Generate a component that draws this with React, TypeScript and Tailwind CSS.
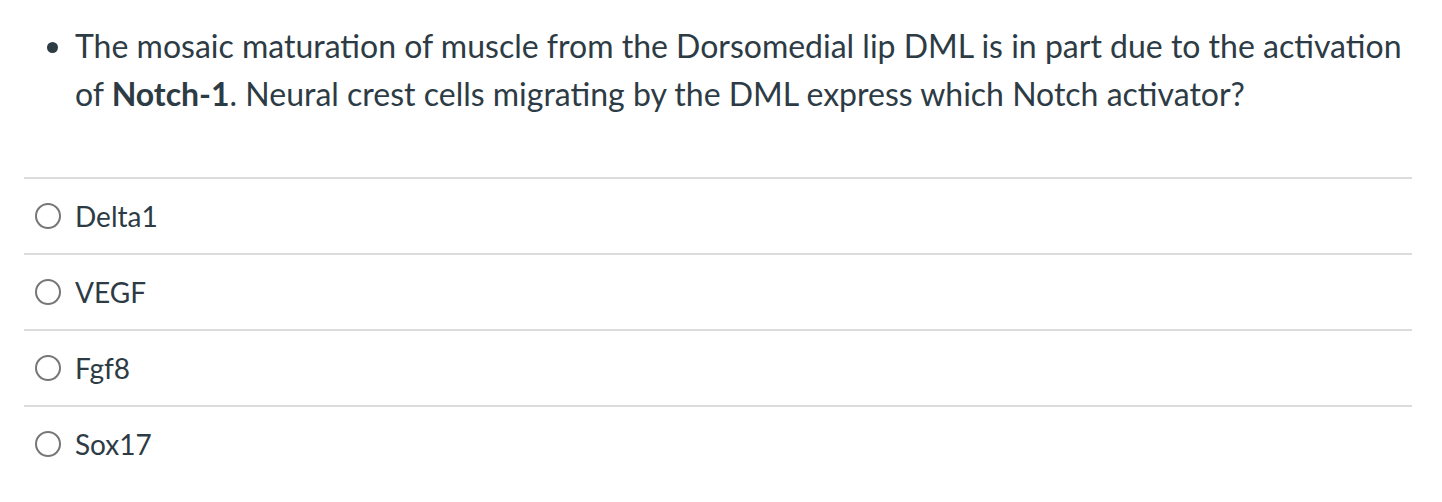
const options = ["Delta1", "VEGF", "Fgf8", "Sox17"];

export default function App() {
  return (
    <div className="w-[1442px] h-[502px] bg-white text-[#2d3b45] font-['Lato',sans-serif] overflow-hidden">
      <div className="pl-[24px] pr-[30px]">
        <ul className="list-disc pl-[51px] pt-[22px] text-[32px] leading-[48px] marker:text-[#2d3b45]">
          <li>
            The mosaic maturation of muscle from the Dorsomedial lip DML is in part due to the activation of{" "}
            <strong className="font-bold">Notch-1</strong>. Neural crest cells migrating by the DML express which Notch
            activator?
          </li>
        </ul>
        <div className="mt-[59px]">
          {options.map((o) => (
            <label
              key={o}
              className="flex items-center h-[76px] border-t-2 border-[#dcdcdc] text-[28px]"
            >
              <span className="ml-[11px] w-[26px] h-[26px] rounded-full border-2 border-[#767676] shrink-0" />
              <span className="ml-[14px]">{o}</span>
            </label>
          ))}
        </div>
      </div>
    </div>
  );
}
